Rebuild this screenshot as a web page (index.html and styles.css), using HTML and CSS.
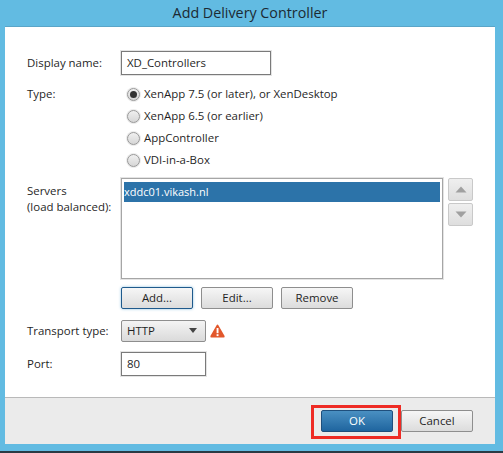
FILE: index.html
```html
<!DOCTYPE html>
<html lang="en">
<head>
<meta charset="utf-8">
<title>Add Delivery Controller</title>
<link rel="stylesheet" href="styles.css">
</head>
<body>
<div class="window">
  <header class="title">Add Delivery Controller</header>
  <main class="panel">
    <form class="form">
      <div class="row row-name">
        <span class="label">Display name:</span>
        <span class="field field-name">XD_Controllers</span>
      </div>
      <div class="row row-type">
        <span class="label">Type:</span>
        <div class="radios">
          <div class="radio-row"><span class="radio checked"></span><span class="radio-text">XenApp 7.5 (or later), or XenDesktop</span></div>
          <div class="radio-row"><span class="radio"></span><span class="radio-text">XenApp 6.5 (or earlier)</span></div>
          <div class="radio-row"><span class="radio"></span><span class="radio-text">AppController</span></div>
          <div class="radio-row"><span class="radio"></span><span class="radio-text">VDI-in-a-Box</span></div>
        </div>
      </div>
      <div class="row row-servers">
        <span class="label label-servers">Servers<br>(load balanced):</span>
        <div class="listbox"><div class="list-item">xddc01.vikash.nl</div></div>
        <div class="movers">
          <span class="mover"><svg width="12" height="7" viewBox="0 0 12 7"><path d="M6 0.5 L11.5 6.5 H0.5 Z" fill="#a0a0a0"/></svg></span>
          <span class="mover"><svg width="12" height="7" viewBox="0 0 12 7"><path d="M0.5 0.5 H11.5 L6 6.5 Z" fill="#a0a0a0"/></svg></span>
        </div>
      </div>
      <div class="row row-actions">
        <span class="btn btn-focus">Add...</span>
        <span class="btn">Edit...</span>
        <span class="btn">Remove</span>
      </div>
      <div class="row row-transport">
        <span class="label">Transport type:</span>
        <span class="combo"><span>HTTP</span><svg width="8" height="5" viewBox="0 0 8 5"><path d="M0 0 H8 L4 5 Z" fill="#444"/></svg></span>
        <svg class="warn" width="15" height="14" viewBox="0 0 15 14"><path d="M7.5 0.5 Q8 0.5 8.4 1.2 L14.6 12 Q15 13.5 13.6 13.5 H1.4 Q0 13.5 0.4 12 L6.6 1.2 Q7 0.5 7.5 0.5 Z" fill="#e2572b"/><rect x="6.6" y="4" width="1.9" height="5.2" fill="#fff"/><rect x="6.6" y="10.2" width="1.9" height="1.9" fill="#fff"/></svg>
      </div>
      <div class="row row-port">
        <span class="label">Port:</span>
        <span class="field field-port">80</span>
      </div>
    </form>
    <footer class="footer">
      <span class="highlight"><span class="btn btn-primary">OK</span></span>
      <span class="btn">Cancel</span>
    </footer>
  </main>
</div>
</body>
</html>
```
FILE: styles.css
```css
* { box-sizing: border-box; }
html, body { margin: 0; padding: 0; }
body {
  width: 503px;
  height: 453px;
  overflow: hidden;
  background: #62bbe2;
  font-family: "Open Sans", "Noto Sans", sans-serif;
  font-size: 11.45px;
  color: #1f1f1f;
}
.window {
  height: 453px;
  display: flex;
  flex-direction: column;
  padding: 0 8px 7px 5px;
  border-bottom: 2px solid #2a3a44;
}
.title {
  height: 27px;
  flex: none;
  text-align: center;
  font-size: 14.3px;
  line-height: 26px;
  color: #1c2a33;
  border-bottom: 1px solid #5aa5c8;
}
.panel {
  flex: 1;
  display: flex;
  flex-direction: column;
  background: #fff;
}
.form {
  flex: 1;
  padding: 24px 22px 0 22px;
}
.row { display: flex; align-items: center; }
.label { width: 94px; flex: none; padding-bottom: 2px; }
.field {
  display: flex;
  align-items: center;
  height: 24px;
  padding: 0 0 2px 5px;
  background: #fff;
  border: 1px solid #7a7a7a;
  box-shadow: 0 0 0 1px #e4e4e4;
}
.field-name { width: 150px; }
.field-port { width: 85px; }
.row-type { align-items: flex-start; margin-top: 8px; }
.row-type .label { line-height: 22px; }
.radios { margin-left: 6px; }
.radio-row {
  display: flex;
  align-items: center;
  gap: 4px;
  height: 22px;
}
.radio-text { padding-bottom: 2px; }
.radio {
  width: 13px;
  height: 13px;
  flex: none;
  border-radius: 50%;
  border: 1px solid #979797;
  background: linear-gradient(#f0f0f0, #d6d6d6);
  box-shadow: 0 0 0 1px #ececec;
  display: flex;
  align-items: center;
  justify-content: center;
}
.radio.checked::after {
  content: "";
  width: 7px;
  height: 7px;
  border-radius: 50%;
  background: #333;
}
.row-servers { align-items: flex-start; margin-top: 7px; }
.label-servers { line-height: 16px; padding-top: 5px; }
.listbox {
  width: 322px;
  height: 101px;
  padding: 3px 2px;
  border: 1px solid #a6a6a6;
  box-shadow: 0 0 0 1px #e4e4e4;
}
.list-item {
  height: 20px;
  line-height: 19px;
  font-size: 11px;
  background: #2c73a9;
  color: #fff;
}
.movers {
  margin-left: 5px;
  display: flex;
  flex-direction: column;
  gap: 2px;
}
.mover {
  width: 25px;
  height: 23px;
  display: flex;
  align-items: center;
  justify-content: center;
  background: linear-gradient(#efefef, #dedede);
  border: 1px solid #c9c9c9;
  border-radius: 2px;
}
.row-actions { margin: 8px 0 0 94px; gap: 8px; }
.btn {
  width: 72px;
  height: 22px;
  padding-bottom: 1px;
  display: flex;
  align-items: center;
  justify-content: center;
  color: #1f1f1f;
  background: linear-gradient(#f6f6f6, #dcdcdc);
  border: 1px solid #8e8e8e;
  border-radius: 2px;
}
.btn-focus {
  border-color: #1f5a8c;
  box-shadow: 0 0 3px #8fc0e0;
}
.row-transport { margin-top: 11px; }
.combo {
  width: 85px;
  height: 22px;
  display: flex;
  align-items: center;
  justify-content: space-between;
  padding: 0 8px 1px 5px;
  background: linear-gradient(#f4f4f4, #dadada);
  border: 1px solid #8e8e8e;
  border-radius: 2px;
}
.warn { margin-left: 4px; }
.row-port { margin-top: 10px; }
.footer {
  height: 47px;
  flex: none;
  display: flex;
  align-items: flex-start;
  justify-content: flex-end;
  padding: 7px 22px 0 0;
  background: #ebebeb;
  border-top: 1px solid #b9b9b9;
}
.highlight {
  display: flex;
  padding: 2px 5px 4px 7px;
  border: 3px solid #ee2b24;
}
.btn-primary {
  color: #fff;
  background: linear-gradient(#4a90c2, #1f659f);
  border-color: #1f4f7c;
}
.footer > .btn { margin-top: 5px; }
```
